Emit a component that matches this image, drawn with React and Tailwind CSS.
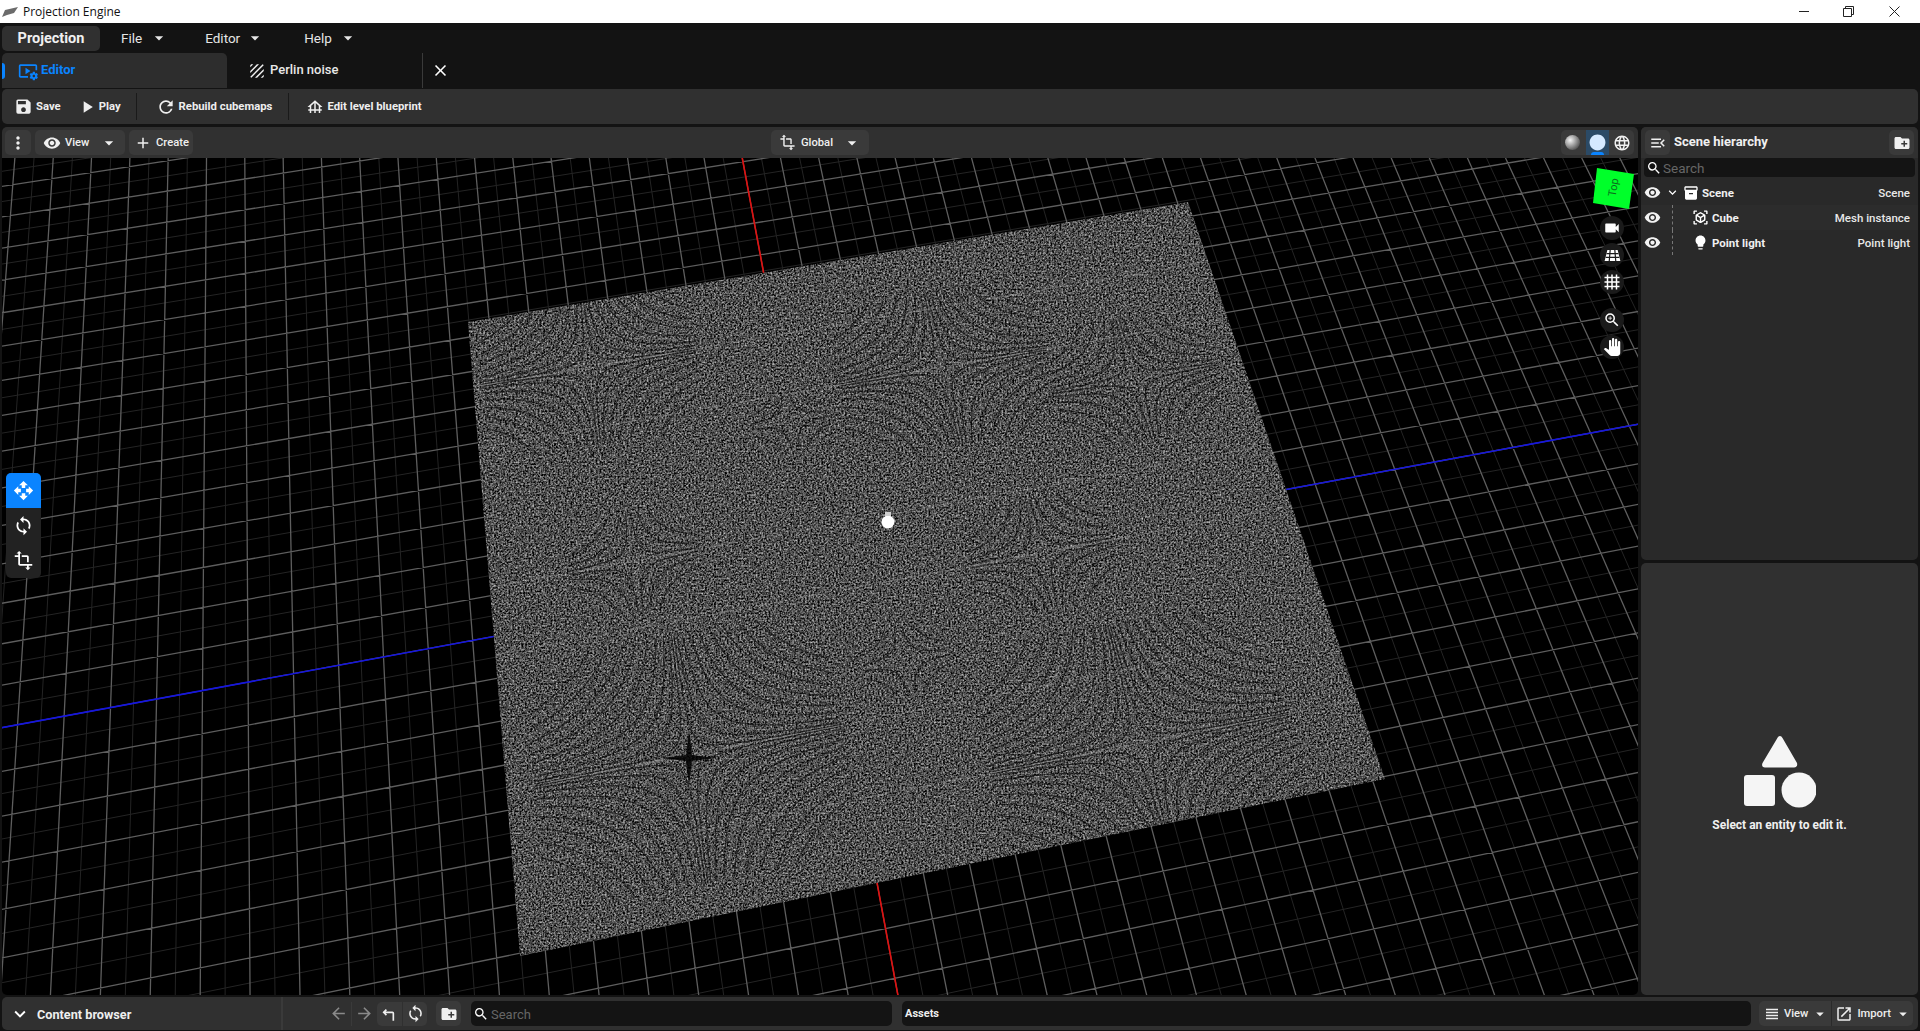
import {
  MdVideoSettings, MdTexture, MdClose, MdArrowDropDown, MdSave, MdPlayArrow, MdRefresh, MdFoundation,
  MdMoreVert, MdVisibility, MdAdd, MdTransform, MdLanguage, MdCircle, MdMenuOpen, MdCreateNewFolder,
  MdSearch, MdExpandMore, MdInventory2, MdViewInAr, MdLightbulb, MdOpenWith, MdSync, MdVideocam,
  MdGrid4X4, MdZoomIn, MdPanTool, MdArrowBack, MdArrowForward, MdViewHeadline, MdOpenInNew, MdTurnLeft,
} from "react-icons/md"

// plane corners on screen -> homography from unit square
const quad = [[468, 322], [1188, 202], [1385, 779], [520, 956]]

const makeHomography = () => {
  const [[x0, y0], [x1, y1], [x2, y2], [x3, y3]] = quad
  const sx = x0 - x1 + x2 - x3
  const sy = y0 - y1 + y2 - y3
  const dx1 = x1 - x2
  const dx2 = x3 - x2
  const dy1 = y1 - y2
  const dy2 = y3 - y2
  const den = dx1 * dy2 - dx2 * dy1
  const g = (sx * dy2 - dx2 * sy) / den
  const h = (dx1 * sy - sx * dy1) / den
  return { a: x1 - x0 + g * x1, b: x3 - x0 + h * x3, c: x0, d: y1 - y0 + g * y1, e: y3 - y0 + h * y3, f: y0, g, h }
}

const H = makeHomography()

const project = (u, v) => {
  const w = H.g * u + H.h * v + 1
  return [(H.a * u + H.b * v + H.c) / w, (H.d * u + H.e * v + H.f) / w]
}

const unproject = (x, y) => {
  const A = H.e - H.f * H.h
  const B = H.f * H.g - H.d
  const C = H.d * H.h - H.e * H.g
  const D = H.c * H.h - H.b
  const E = H.a - H.c * H.g
  const F = H.b * H.g - H.a * H.h
  const G = H.b * H.f - H.c * H.e
  const I = H.c * H.d - H.a * H.f
  const J = H.a * H.e - H.b * H.d
  const w = C * x + F * y + J
  return [(A * x + D * y + G) / w, (B * x + E * y + I) / w]
}

const pt = ([x, y]) => `${x.toFixed(1)} ${y.toFixed(1)}`

const [originU, originV] = unproject(820, 576)

// the plane is about 18.8 x 15.5 big cells wide and deep
const gridPath = (odd) => {
  let d = ""
  for (let i = -80; i <= 120; i++) {
    if (Math.abs(i % 2) !== odd) continue
    const u = originU + i / 37.6
    const v = originV + i / 31
    d += `M${pt(project(u, -2))}L${pt(project(u, 2.6))}`
    d += `M${pt(project(-3, v))}L${pt(project(4, v))}`
  }
  return d
}

const majorGrid = gridPath(0)
const minorGrid = gridPath(1)

const stars = [
  { x: 590, y: 367, r: 0.14, n: 14 },
  { x: 943, y: 367, r: 0.14, n: 14 },
  { x: 689, y: 755, r: 0.18, n: 18 },
  { x: 1141, y: 743, r: 0.18, n: 18 },
  { x: 1041, y: 553, r: 0.09, n: 9 },
  { x: 634, y: 561, r: 0.08, n: 7 },
  { x: 1135, y: 378, r: 0.11, n: 11 },
  { x: 790, y: 420, r: 0.05, n: 5 },
  { x: 905, y: 660, r: 0.05, n: 5 },
]

const hyperbolas = (odd) => {
  let d = ""
  stars.forEach((s) => {
    const [su, sv] = unproject(s.x, s.y)
    for (let k = 1; k <= s.n; k++) {
      if (k % 2 !== odd) continue
      const c = (0.0075 * k) ** 2
      for (const [qx, qy] of [[1, 1], [1, -1], [-1, 1], [-1, -1]]) {
        let path = ""
        for (let i = 0; i <= 16; i++) {
          const t = (c / s.r) * Math.pow(s.r / (c / s.r), i / 16)
          path += `${i ? "L" : "M"}${pt(project(su + qx * t, sv + qy * (c / t)))}`
        }
        d += path
      }
    }
  })
  return d
}

const darkArcs = hyperbolas(0)
const lightArcs = hyperbolas(1)

const starRows = (() => {
  let d = ""
  stars.slice(0, 6).forEach((s) => {
    const [, sv] = unproject(s.x, s.y)
    d += `M${pt(project(0, sv))}L${pt(project(1, sv))}`
  })
  return d
})()

const polygon = quad.map((p) => p.join(",")).join(" ")

const Viewport = () => (
  <svg viewBox="2 158 1636 837" className="absolute inset-0 w-full h-full">
    <defs>
      <clipPath id="plane"><polygon points={polygon} /></clipPath>
      <filter id="noise" x="0" y="0" width="100%" height="100%" colorInterpolationFilters="sRGB">
        <feTurbulence type="fractalNoise" baseFrequency="0.55" numOctaves="2" seed="4" />
        <feColorMatrix type="matrix" values="1.25 0 0 0 -0.32  1.25 0 0 0 -0.32  1.25 0 0 0 -0.32  0 0 0 0 1" />
      </filter>
      <filter id="specks" x="0" y="0" width="100%" height="100%" colorInterpolationFilters="sRGB">
        <feTurbulence type="fractalNoise" baseFrequency="0.7" numOctaves="1" seed="11" />
        <feColorMatrix type="matrix" values="0 0 0 0 0.75  0 0 0 0 0.75  0 0 0 0 0.75  7 0 0 0 -5.2" />
      </filter>
    </defs>
    <rect x="2" y="158" width="1636" height="837" fill="#000" />
    <path d={minorGrid} stroke="#242424" strokeWidth="1" fill="none" />
    <path d={majorGrid} stroke="#5e5e5e" strokeWidth="1.3" fill="none" />
    <path d={`M${pt(project(originU, -2))}L${pt(project(originU, 2.6))}`} stroke="#e01010" strokeWidth="1.6" fill="none" />
    <path d={`M${pt(project(-3, originV))}L${pt(project(4, originV))}`} stroke="#1414e0" strokeWidth="1.6" fill="none" />
    <g clipPath="url(#plane)">
      <rect x="440" y="190" width="960" height="780" filter="url(#noise)" />
      <path d={lightArcs} stroke="#9a9a9a" strokeOpacity="0.3" strokeWidth="0.8" fill="none" />
      <path d={darkArcs} stroke="#0a0a0a" strokeOpacity="0.6" strokeWidth="1.1" fill="none" />
      <path d={starRows} stroke="#b0b0b0" strokeOpacity="0.35" strokeWidth="1.2" strokeDasharray="30 14" fill="none" />
      <rect x="440" y="190" width="960" height="780" filter="url(#specks)" opacity="0.5" />
    </g>
    <path d="M686 755 L689 730 L692 755 L716 758 L692 761 L689 785 L686 761 L662 758Z" fill="#000" opacity="0.85" />
    <circle cx="888" cy="522" r="6.5" fill="#fff" />
    <rect x="885" y="512" width="6" height="4" fill="#cfcfcf" />
    <polygon points="1597,168 1634,174 1629,209 1593,203" fill="#00ff2a" />
    <text x="0" y="0" fontSize="11" fill="#0c6b1c" textAnchor="middle" fontFamily="Roboto, sans-serif" transform="translate(1617 188) rotate(-80)">Top</text>
  </svg>
)

const GizmoButton = ({ className, children }) => (
  <div className={`w-6 h-6 rounded-full bg-[#1a1a1a] flex items-center justify-center text-white text-[18px] ${className || ""}`}>
    {children}
  </div>
)

const PerspectiveGrid = () => (
  <svg viewBox="0 0 18 14" className="w-[17px] h-[13px]" fill="none" stroke="#fff" strokeWidth="1.3">
    <path fill="#fff" stroke="none" d="M3.5 1h11L17.5 13H.5z" />
    <path stroke="#1a1a1a" d="M6.5 1L5.5 13M11.5 1l1 12M2.6 5h12.8M1.7 9h14.6" />
  </svg>
)

const ToolButton = ({ active, children }) => (
  <div className={`h-[35px] flex items-center justify-center text-white text-[21px] ${active ? "bg-[#0a84ff]" : ""}`}>
    {children}
  </div>
)

const Row = ({ icon, label, type, expand, odd }) => (
  <div className={`h-[25px] flex items-center text-[11.5px] ${odd ? "bg-[#2c2c2c]" : "bg-[#292929]"}`}>
    <MdVisibility className="text-[17px] ml-[3px] text-[#f2f2f2] shrink-0" />
    {expand ? (
      <MdExpandMore className="text-[15px] ml-[4px] text-white shrink-0" />
    ) : (
      <div className="w-[15px] ml-[4px] h-full flex justify-center shrink-0">
        <div className="border-l border-dashed border-[#777] h-full" />
      </div>
    )}
    <div className={`flex items-center gap-[3px] ${expand ? "ml-[3px]" : "ml-[12px]"}`}>
      {icon}
      <span className="font-bold text-[#f0f0f0] mt-[2px]">{label}</span>
    </div>
    <span className="ml-auto pr-[8px] font-medium text-[#e8e8e8] mt-[2px]">{type}</span>
  </div>
)

const HeadBtn = ({ className, children }) => (
  <div className={`h-[25px] rounded-[5px] bg-[#3a3a3a] flex items-center text-[#f0f0f0] ${className || ""}`}>
    {children}
  </div>
)

const App = () => {
  return (
    <div className="w-[1920px] h-[1031px] overflow-hidden flex flex-col bg-[#131313] font-['Roboto',sans-serif] text-white">
      {/* title bar */}
      <div className="h-[23px] bg-white flex items-center shrink-0 text-[#111]">
        <svg viewBox="0 0 16 10" className="w-[16px] h-[10px] ml-[2px]">
          <path d="M0 10 L3 3 L16 0 L12 6 L5 8z" fill="#6b6b6b" />
        </svg>
        <span className="ml-[5px] text-[12px] font-['Open_Sans',sans-serif]">Projection Engine</span>
        <div className="ml-auto flex items-center">
          <div className="w-[10px] h-px bg-[#222] mr-[34px]" />
          <svg viewBox="0 0 11 11" className="w-[11px] h-[11px] mr-[35px]" fill="none" stroke="#222">
            <path d="M.5 2.500h8v8h-8zM2.500 2.500v-2h8v8h-2" />
          </svg>
          <svg viewBox="0 0 11 11" className="w-[11px] h-[11px] mr-[20px]" fill="none" stroke="#222">
            <path d="M.5.5l10 10M10.500.5l-10 10" />
          </svg>
        </div>
      </div>

      {/* menu */}
      <div className="h-[30px] flex items-center pl-[2px] shrink-0 text-[13.5px] text-[#e6e6e6]">
        <div className="w-[98px] h-[25px] rounded-[5px] bg-[#303030] flex items-center justify-center text-[14.5px] font-bold text-[#f0f0f0] pt-[1px]">
          Projection
        </div>
        <span className="ml-[21px]">File</span>
        <MdArrowDropDown className="text-[20px] ml-[7px]" />
        <span className="ml-[36px]">Editor</span>
        <MdArrowDropDown className="text-[20px] ml-[5px]" />
        <span className="ml-[39px]">Help</span>
        <MdArrowDropDown className="text-[20px] ml-[6px]" />
      </div>

      {/* tabs */}
      <div className="h-[35px] flex shrink-0">
        <div className="w-[225px] ml-[2px] rounded-t-[5px] bg-[#2d2d2d] flex items-center relative text-[#0a84ff]">
          <div className="absolute left-0 top-[10px] w-[3px] h-[16px] bg-[#0a84ff] rounded-r" />
          <MdVideoSettings className="text-[20px] ml-[16px]" />
          <span className="ml-[3px] text-[13px] font-bold -mt-px">Editor</span>
        </div>
        <div className="w-[196px] flex items-center border-r border-[#3a3a3a]">
          <MdTexture className="text-[18px] ml-[21px] text-[#f2f2f2]" />
          <span className="ml-[4px] text-[13px] font-medium text-[#e8e8e8] -mt-px">Perlin noise</span>
        </div>
        <MdClose className="text-[19px] ml-[8px] self-center text-white" />
      </div>

      {/* toolbar */}
      <div className="h-[35px] mx-[2px] mt-px rounded-[5px] bg-[#303030] flex items-center shrink-0 text-[11.3px] font-bold text-[#eeeeee]">
        <MdSave className="text-[19px] ml-[12px]" />
        <span className="ml-[3px] mt-[2px]">Save</span>
        <MdPlayArrow className="text-[20px] ml-[16px]" />
        <span className="ml-[2px] mt-[2px]">Play</span>
        <div className="w-px h-[27px] bg-[#1a1a1a] ml-[15px]" />
        <MdRefresh className="text-[20px] ml-[19px]" />
        <span className="ml-[3px] mt-[2px]">Rebuild cubemaps</span>
        <div className="w-px h-[27px] bg-[#1a1a1a] ml-[16px]" />
        <MdFoundation className="text-[18px] ml-[17px]" />
        <span className="ml-[3px] mt-[2px]">Edit level blueprint</span>
      </div>

      {/* main */}
      <div className="flex mt-[3px] mx-[2px] gap-[3px] h-[868px] shrink-0">
        <div className="w-[1636px] flex flex-col">
          <div className="h-[31px] bg-[#303030] rounded-t-[5px] flex items-center pl-[3px] pr-[4px] text-[11.2px] font-medium shrink-0">
            <HeadBtn className="w-[26px] justify-center text-[20px]"><MdMoreVert /></HeadBtn>
            <HeadBtn className="w-[90px] ml-[4px]">
              <MdVisibility className="text-[18px] ml-[8px]" />
              <span className="ml-[4px] mt-[2px]">View</span>
              <MdArrowDropDown className="text-[20px] ml-[10px]" />
            </HeadBtn>
            <HeadBtn className="w-[64px] ml-[4px]">
              <MdAdd className="text-[18px] ml-[5px]" />
              <span className="ml-[4px] mt-[2px]">Create</span>
            </HeadBtn>
            <HeadBtn className="w-[98px] ml-[578px]">
              <MdTransform className="text-[17px] ml-[8px]" />
              <span className="ml-[5px] mt-[2px]">Global</span>
              <MdArrowDropDown className="text-[20px] ml-[9px]" />
            </HeadBtn>
            <div className="ml-auto flex h-[25px] w-[73px] rounded-[5px] bg-[#3a3a3a] overflow-hidden">
              <div className="w-[25px] flex items-center justify-center pr-[2px]">
                <div className="w-[15px] h-[15px] rounded-full bg-[radial-gradient(circle_at_35%_35%,#f5f5f5,#555_75%)]" />
              </div>
              <div className="w-[23px] relative flex items-center justify-center bg-[#2b4a66]">
                <MdCircle className="text-[19px] text-[#d5e9ff]" />
                <div className="absolute bottom-0 left-[5px] w-[13px] h-[3px] bg-[#0a84ff] rounded-t" />
              </div>
              <div className="w-[25px] flex items-center justify-center">
                <MdLanguage className="text-[18px] text-[#f0f0f0]" />
              </div>
            </div>
          </div>

          <div className="relative flex-1 overflow-hidden rounded-b-[5px]">
            <Viewport />
            <div className="absolute left-[4px] top-[315px] w-[35px] rounded-[5px] overflow-hidden bg-[#222222]">
              <ToolButton active><MdOpenWith /></ToolButton>
              <ToolButton><MdSync /></ToolButton>
              <ToolButton><MdTransform /></ToolButton>
            </div>
            <div className="absolute left-[1598px] top-[58px] flex flex-col gap-[3px]">
              <GizmoButton><MdVideocam /></GizmoButton>
              <GizmoButton><PerspectiveGrid /></GizmoButton>
              <GizmoButton><MdGrid4X4 /></GizmoButton>
              <GizmoButton className="mt-[11px]"><MdZoomIn /></GizmoButton>
              <GizmoButton><MdPanTool /></GizmoButton>
            </div>
          </div>
        </div>

        <div className="w-[277px] flex flex-col gap-[3px]">
          <div className="h-[433px] rounded-[5px] bg-[#292929] overflow-hidden shrink-0">
            <div className="h-[31px] bg-[#303030] flex items-center px-[4px]">
              <HeadBtn className="w-[25px] justify-center text-[18px]"><MdMenuOpen /></HeadBtn>
              <span className="ml-[4px] -mt-[2px] text-[13px] font-bold text-[#f0f0f0]">Scene hierarchy</span>
              <HeadBtn className="w-[25px] justify-center text-[18px] ml-auto"><MdCreateNewFolder /></HeadBtn>
            </div>
            <div className="h-[19px] mx-[3px] rounded-[4px] bg-[#141414] flex items-center text-[13.5px] text-[#666666]">
              <MdSearch className="text-[16px] ml-[2px] text-white" />
              <span className="ml-[1px] mt-[2px]">Search</span>
            </div>
            <div className="mt-[3px]">
              <Row expand icon={<MdInventory2 className="text-[16px]" />} label="Scene" type="Scene" />
              <Row odd icon={<MdViewInAr className="text-[17px]" />} label="Cube" type="Mesh instance" />
              <Row icon={<MdLightbulb className="text-[17px]" />} label="Point light" type="Point light" />
            </div>
          </div>
          <div className="flex-1 rounded-[5px] bg-[#303030] flex flex-col items-center pt-[173px]">
            <svg viewBox="0 0 72 72" className="w-[72px] h-[72px]" fill="#f5f5f5">
              <path d="M34 1 Q35 0 36 0 Q37.500 0 38.500 2 L53 27 Q54 31 50 31.500 L21 31.500 Q17 31 18.500 27z" />
              <rect x="0" y="39" width="31" height="31" rx="3" />
              <circle cx="55" cy="54" r="17.500" />
            </svg>
            <span className="mt-[8px] text-[12px] font-bold text-[#f0f0f0]">Select an entity to edit it.</span>
          </div>
        </div>
      </div>

      {/* content browser */}
      <div className="h-[33px] mx-[2px] mt-[2px] rounded-[5px] bg-[#303030] flex items-center shrink-0 text-[#eeeeee]">
        <div className="w-[279px] h-full flex items-center shrink-0">
          <MdExpandMore className="text-[22px] ml-[7px] text-white" />
          <span className="ml-[6px] text-[12.7px] font-bold whitespace-nowrap mt-[2px]">Content browser</span>
        </div>
        <div className="w-[2px] h-full bg-[#3a3a3a] shrink-0" />
        <MdArrowBack className="text-[19px] ml-[46px] text-[#8a8a8a] shrink-0" />
        <div className="w-px h-[24px] bg-[#3a3a3a] ml-[3px] shrink-0" />
        <MdArrowForward className="text-[19px] ml-[3px] text-[#8a8a8a] shrink-0" />
        <div className="flex h-[24px] ml-[3px] rounded-[5px] bg-[#3a3a3a] overflow-hidden shrink-0">
          <div className="w-[25px] flex items-center justify-center"><MdTurnLeft className="text-[20px]" /></div>
          <div className="w-[25px] flex items-center justify-center border-l border-[#303030]"><MdSync className="text-[19px]" /></div>
        </div>
        <HeadBtn className="w-[25px] ml-[9px] justify-center text-[18px] shrink-0"><MdCreateNewFolder /></HeadBtn>
        <div className="w-[421px] h-[25px] ml-[10px] rounded-[5px] bg-[#141414] flex items-center text-[13px] text-[#666666] shrink-0">
          <MdSearch className="text-[16px] ml-[2px] text-white" />
          <span className="ml-[2px] mt-[2px]">Search</span>
        </div>
        <div className="w-[849px] h-[25px] ml-[10px] rounded-[5px] bg-[#141414] flex items-center text-[11px] font-bold pl-[3px] shrink-0">
          <span className="mt-[2px]">Assets</span>
        </div>
        <div className="w-[154px] h-[25px] ml-[8px] rounded-[5px] bg-[#3a3a3a] flex items-center text-[11.2px] font-medium shrink-0">
          <MdViewHeadline className="text-[18px] ml-[4px]" />
          <span className="ml-[3px] mt-[2px]">View</span>
          <MdArrowDropDown className="text-[18px] ml-[3px]" />
          <div className="w-px h-full bg-[#2a2a2a] ml-[2px]" />
          <MdOpenInNew className="text-[18px] ml-[3px]" />
          <span className="ml-[4px] mt-[2px]">Import</span>
          <MdArrowDropDown className="text-[18px] ml-[3px]" />
        </div>
      </div>
    </div>
  )
}

export default App
